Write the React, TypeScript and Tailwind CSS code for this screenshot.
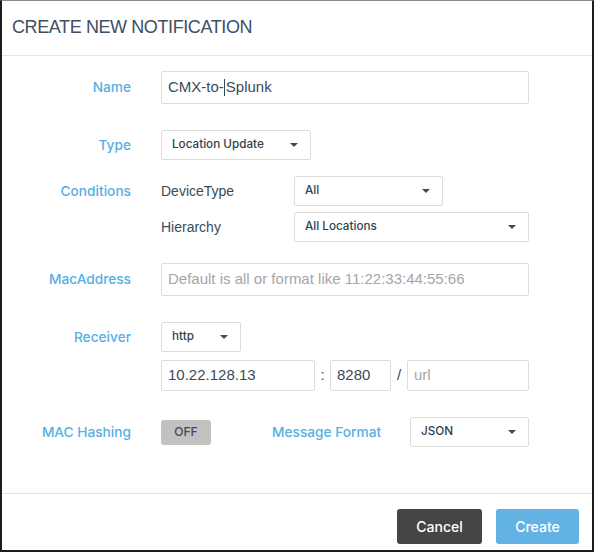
import clsx from "clsx";

const font = { fontFamily: '"Liberation Sans", Arial, sans-serif' };
const medium = "font-['Inter',_'Liberation_Sans',_sans-serif] font-medium";

function Caret() {
  return <span className="h-0 w-0 border-x-[4px] border-t-[4px] border-x-transparent border-t-[#3b4a5b]" />;
}

function Select({ value, className }: { value: string; className?: string }) {
  return (
    <div
      className={clsx(
        "flex h-[30px] items-center justify-between rounded-[2px] border border-[#dcdcdc] bg-white pl-[10px] pr-[12px] text-[11.7px] text-[#2f3f50]",
        medium,
        className,
      )}
    >
      <span>{value}</span>
      <Caret />
    </div>
  );
}

function Field({ children, className, muted }: { children: React.ReactNode; className?: string; muted?: boolean }) {
  return (
    <div
      className={clsx(
        "flex items-center rounded-[2px] border border-[#dcdcdc] bg-white pl-[6px] text-[15px]",
        muted ? "text-[#a6a6a6]" : "text-[#3b4a5b]",
        className,
      )}
    >
      {children}
    </div>
  );
}

function Row({ label, height, className, children }: { label: string; height: string; className?: string; children: React.ReactNode }) {
  return (
    <div className={clsx("flex items-start", className)}>
      <div className={clsx("flex w-[129px] shrink-0 items-center justify-end text-[13.7px] text-[#56afe3]", medium, height)}>
        {label}
      </div>
      <div className="ml-[30px] flex flex-col">{children}</div>
    </div>
  );
}

export default function App() {
  return (
    <div className="bg-white" style={font}>
      <div className="flex h-[552px] w-[594px] flex-col border-x-2 border-b-2 border-t border-[#1c1c1c] border-t-[#8a8a8a] bg-white">
        <div className="flex h-[55px] shrink-0 items-center border-b border-[#e4e4e4] pb-[2px] pl-[10px]">
          <h1 className="text-[18px] leading-[18px] tracking-[-0.4px] text-[#3d4f63]">CREATE NEW NOTIFICATION</h1>
        </div>

        <div className="flex-1 pt-[15px]">
          <Row label="Name" height="h-[33px]">
            <Field className="h-[33px] w-[368px]">
              CMX-to-<span className="mx-[0.5px] inline-block h-[17px] w-px bg-[#3b4a5b]" />Splunk
            </Field>
          </Row>

          <Row label="Type" height="h-[30px]" className="mt-[26px]">
            <Select value="Location Update" className="w-[150px]" />
          </Row>

          <Row label="Conditions" height="h-[30px]" className="mt-[16px]">
            <div className="flex flex-col gap-[6px]">
              <div className="flex items-center">
                <span className="w-[133px] text-[14px] text-[#3b4a5b]">DeviceType</span>
                <Select value="All" className="w-[149px]" />
              </div>
              <div className="flex items-center">
                <span className="w-[133px] text-[14px] text-[#3b4a5b]">Hierarchy</span>
                <Select value="All Locations" className="w-[235px]" />
              </div>
            </div>
          </Row>

          <Row label="MacAddress" height="h-[33px]" className="mt-[21px]">
            <Field muted className="h-[33px] w-[368px] text-[14px]">
              Default is all or format like 11:22:33:44:55:66
            </Field>
          </Row>

          <Row label="Receiver" height="h-[30px]" className="mt-[26px]">
            <Select value="http" className="w-[80px]" />
            <div className="mt-[8px] flex h-[31px] w-[368px] items-center text-[15px] text-[#3b4a5b]">
              <Field className="h-full w-[154px]">10.22.128.13</Field>
              <span className="w-[15px] text-center">:</span>
              <Field className="h-full w-[61px]">8280</Field>
              <span className="w-[16px] text-center">/</span>
              <Field muted className="h-full flex-1">url</Field>
            </div>
          </Row>

          <Row label="MAC Hashing" height="h-[30px]" className="mt-[26px]">
            <div className="flex h-[30px] items-center">
              <div
                className={clsx(
                  "flex h-[25px] w-[50px] items-center justify-center rounded-[3px] bg-[#c1c1c1] text-[12px] text-[#3b4a5b]",
                  medium,
                )}
              >
                OFF
              </div>
              <span className={clsx("ml-[61px] w-[138px] text-[13.7px] text-[#56afe3]", medium)}>Message Format</span>
              <Select value="JSON" className="w-[119px]" />
            </div>
          </Row>
        </div>

        <div className="flex h-[57px] shrink-0 items-start justify-end gap-[14px] border-t border-[#e4e4e4] pr-[13px] pt-[15px]">
          <button className={clsx("h-[35px] w-[85px] rounded-[3px] bg-[#454545] text-[14px] text-white", medium)}>Cancel</button>
          <button className={clsx("h-[35px] w-[83px] rounded-[3px] bg-[#62b3e3] text-[14px] text-white", medium)}>Create</button>
        </div>
      </div>
    </div>
  );
}
